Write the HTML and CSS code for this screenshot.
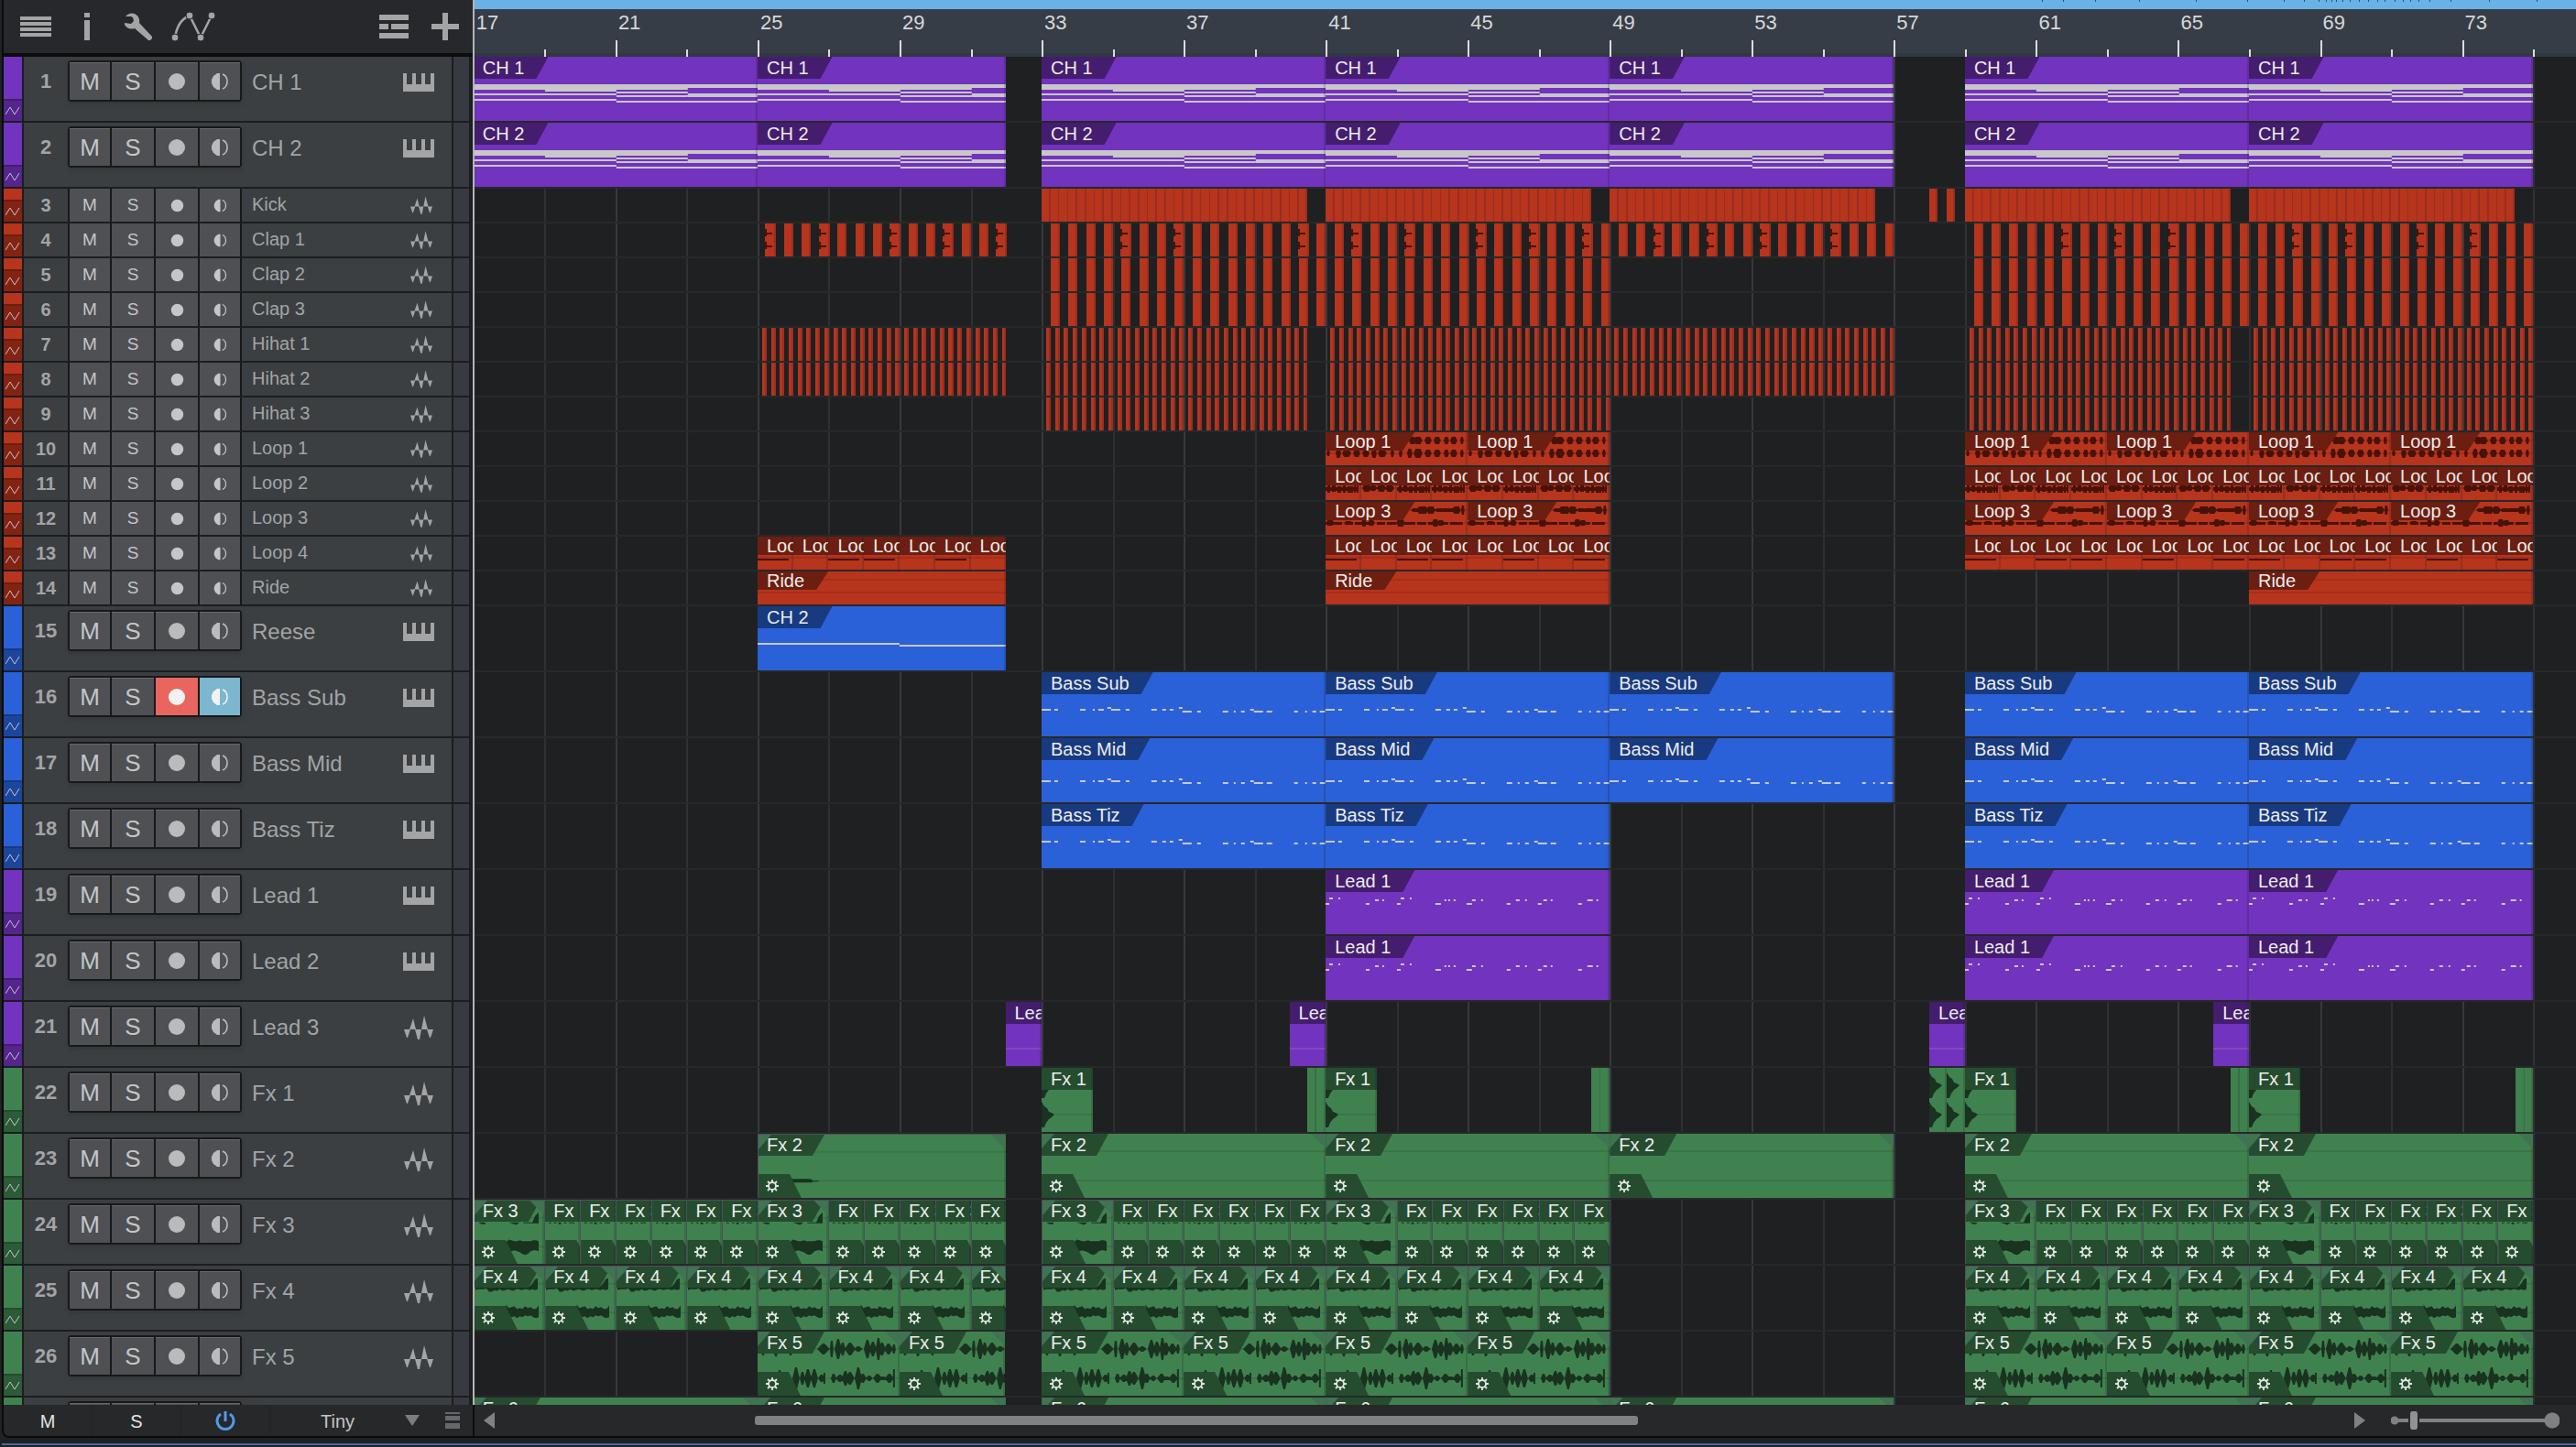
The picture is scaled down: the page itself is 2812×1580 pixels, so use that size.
FILE: index.html
```html
<!DOCTYPE html>
<html lang="en">
<head>
  <meta charset="UTF-8" />
  <meta name="viewport" content="width=device-width, initial-scale=1.0"/>
  <title>Arrangement</title>
  <link rel="stylesheet" href="styles.css">
</head>
<body>
  <svg class="symbols" aria-hidden="true">
    <symbol id="keys" viewBox="0 0 34 20"><path d="M0 0H4V12H10V0H14V12H20V0H24V12H30V0H34V20H0Z"/></symbol>
    <symbol id="audio" viewBox="0 0 32 26"><path d="M0 15H6L10 3L13 15H19L22 0L26 15H32L29 24H28L25 15L19 15L17 26H15L12 15H7L4 24H3Z"/></symbol>
    <symbol id="rec" viewBox="0 0 20 20"><circle cx="10" cy="10" r="9"/></symbol>
    <symbol id="monitor" viewBox="0 0 20 20"><path d="M10 1H7L3 4L1 8V12L3 16L7 19H10Z"/><path d="M13 2Q18 4 18 10T13 18" fill="none" stroke="currentColor" stroke-width="1.6"/></symbol>
    <symbol id="auto" viewBox="0 0 16 10"><path d="M0 9L5 1L10 9L15 1" fill="none" stroke="currentColor"/></symbol>
    <symbol id="gear" viewBox="0 0 14 14"><circle cx="7" cy="7" r="4" fill="none" stroke="currentColor" stroke-width="1.8"/><path d="M7 0V3M7 11V14M0 7H3M11 7H14M2 2L4 4M10 10L12 12M12 2L10 4M4 10L2 12" fill="none" stroke="currentColor" stroke-width="1.8"/></symbol>
  </svg>

  <main class="window">
    <header class="toolbar">
      <button class="tool" aria-label="Track list"><svg width="34" height="22"><path d="M0 2H34M0 8H34M0 14H34M0 20H34" stroke="currentColor" stroke-width="4"/></svg></button>
      <button class="tool" aria-label="Inspector"><svg width="6" height="30"><path d="M0 0H6V5H0ZM0 8H6V30H0Z"/></svg></button>
      <button class="tool" aria-label="Options"><svg width="31" height="30" viewBox="0 0 31 30"><path d="M1 4Q5 -1 11 1Q17 4 16 11L30 26L30 28L28 30H26L11 17Q4 19 0 13V11L7 12L10 9L9 5L7 4Z"/></svg></button>
      <button class="tool tool-wide" aria-label="Show automation"><svg width="48" height="32" viewBox="0 0 48 32"><path d="M4 28Q7 9 20 4L32 28L44 4" fill="none" stroke="currentColor" stroke-width="2.5"/><g stroke="#27282b"><circle cx="4" cy="28" r="4"/><circle cx="20" cy="4" r="4"/><circle cx="32" cy="28" r="4"/><circle cx="44" cy="4" r="4"/></g></svg></button>
      <button class="tool tool-right" aria-label="Arranger"><svg width="32" height="26"><path d="M0 0H32V6H0ZM0 10H10V16H0ZM13 10H32V16H13ZM0 20H32V26H0Z"/></svg></button>
      <button class="tool" aria-label="Add tracks"><svg width="30" height="30"><path d="M12 0H18V12H30V18H18V30H12V18H0V12H12Z"/></svg></button>
    </header>
    <div class="ruler" id="ruler"></div>

    <ol class="track-list" id="trackList"></ol>
    <section class="arrangement" id="arrangement" aria-label="Arrangement"></section>

    <footer class="track-footer">
      <button class="foot-btn">M</button>
      <button class="foot-btn">S</button>
      <button class="foot-btn power" aria-label="Power"><svg width="22" height="22" viewBox="0 0 22 22"><path d="M6 3A9 9 0 1 0 16 3M11 0V11" fill="none" stroke="currentColor" stroke-width="3"/></svg></button>
      <label class="size-pick">
        <select aria-label="Track height"><option>Tiny</option><option>Small</option><option>Normal</option></select>
        <svg width="16" height="12"><path d="M0 0H16L8 12Z"/></svg>
      </label>
      <button class="foot-menu" aria-label="Sizes"><svg width="16" height="18"><path d="M0 1H16" stroke="currentColor" stroke-width="2"/><path d="M0 4H16V9H0ZM0 12H16V18H0Z"/></svg></button>
    </footer>
    <footer class="scroll-footer">
      <button class="arrow" aria-label="Scroll left"><svg width="12" height="18"><path d="M12 0V18L0 9Z"/></svg></button>
      <div class="scroll-track"><div class="scroll-thumb"></div></div>
      <button class="arrow" aria-label="Scroll right"><svg width="12" height="18"><path d="M0 0V18L12 9Z"/></svg></button>
      <label class="zoom"><input type="range" min="0" max="100" value="11" aria-label="Horizontal zoom"></label>
    </footer>
  </main>
  <div class="desk-edge"></div>

  <script src="script.js"></script>
</body>
</html>
```
FILE: styles.css
```css
* { box-sizing: border-box; }
html, body { height: 100%; }
body {
  margin: 0;
  padding-left: 2px;
  display: flex;
  flex-direction: column;
  background: #202123;
  font-family: "Liberation Sans", Arial, sans-serif;
  color: #a2a4a6;
  overflow: hidden;
}
button { padding: 0; border: none; background: none; color: inherit; font-family: inherit; cursor: pointer; }
svg { display: block; fill: currentColor; }
.symbols { position: absolute; width: 0; height: 0; }

.window {
  flex: 1;
  min-height: 0;
  display: grid;
  grid-template-columns: 514px 1fr;
  grid-template-rows: 62px 1fr 34px;
  border-left: 2px solid #0a0b0c;
  border-bottom: 2px solid #0a0b0c;
  border-bottom-left-radius: 8px;
  background: #27282a;
}
.desk-edge { height: 10px; padding-top: 6px; }
.desk-edge::before { content: ""; display: block; height: 2px; background: #456a9c; }

/* top bar */
.toolbar { display: flex; align-items: center; padding: 0 2px 0 7px; background: #27282b; border-bottom: 4px solid #0b0c0d; border-right: 2px solid #0b0c0d; }
.tool { width: 56px; height: 58px; display: flex; align-items: center; justify-content: center; }
.tool-wide { width: 64px; }
.tool-right { margin-left: auto; }
.ruler { position: relative; background: #363d46; border-top: 10px solid #68b2e6; border-bottom: 4px solid #303842; box-shadow: -2px 0 0 #b4b5b7; }
.bar-no { position: absolute; top: 3px; margin-left: 3px; font-size: 22px; line-height: 24px; color: #d6d8da; }
.tick { position: absolute; bottom: -4px; width: 2px; height: 8px; background: #dcdcdc; }
.tick.major { height: 18px; }
.blip { position: absolute; top: -10px; width: 1px; height: 2px; background: #27506e; }

/* track headers */
.track-list { margin: 0; padding: 0; list-style: none; overflow: hidden; min-height: 0; background: #1c1d1f; border-right: 2px solid #0b0c0d; }
.track { display: flex; height: 72px; padding-bottom: 2px; width: 508px; background: #1c1d1f; }
.track.small { height: 38px; }
.strip { width: 20px; margin-right: 2px; display: flex; flex-direction: column; background: var(--clip); }
.strip svg { margin-top: auto; width: 20px; height: 24px; padding: 6px 2px; border-top: 2px solid var(--label); background: var(--strip); color: #c9bfd2; }
.track-main { width: 467px; height: 70px; padding-bottom: 17px; display: flex; align-items: center; background: #3b3f41; }
.small .track-main { height: 36px; padding-bottom: 0; }
.track-no { width: 48px; text-align: center; font-size: 22px; font-weight: bold; }
.small .track-no { font-size: 20px; }
.switches { width: 190px; height: 45px; padding: 2px; display: grid; grid-template-columns: 44px 46px 46px 44px; gap: 2px; background: #17181a; border-radius: 4px; box-shadow: 0 3px 4px #35383b; }
.small .switches { height: 36px; padding: 0 2px; border-radius: 0; box-shadow: none; }
.switches button { display: flex; align-items: center; justify-content: center; font-size: 26px; background: #4e5054; border-top: 1px solid #67696d; color: #c4c6c8; }
.small .switches button { font-size: 19px; border-top: none; }
.switches svg { width: 20px; height: 20px; color: #b9bbbd; }
.small .switches svg { width: 15px; height: 15px; color: #c4c6c8; }
.switches .armed { background: #e8665f; border-color: #e8665f; }
.switches .listening { background: #7cb6cf; border-color: #7cb6cf; }
.switches .armed svg, .switches .listening svg { color: #f2f2f2; }
.track-name { margin-left: 11px; padding-top: 2px; flex: 1; font-size: 24px; white-space: nowrap; }
.small .track-name { padding-top: 0; font-size: 20px; line-height: 34px; height: 36px; }
.kind { width: 34px; height: 20px; margin-right: 19px; margin-top: 2px; }
.kind.wave { height: 26px; }
.small .kind { width: 24px; height: 20px; margin-right: 21px; margin-top: 0; }
.track-end { width: 17px; margin-left: 2px; background: #373a40; }

/* clips */
.arrangement { position: relative; overflow: hidden; min-height: 0; background: #1f2022; box-shadow: -2px 0 0 #b4b5b7; }
.grid-line { position: absolute; top: 0; bottom: 0; width: 2px; background: #2f3032; }
.grid-line.major { background: #39393c; }
.lane { position: relative; height: 72px; border-bottom: 2px solid #27282a; }
.lane.small { height: 38px; }
.clip { position: absolute; top: 0; height: 100%; overflow: hidden; background: var(--clip); color: var(--wave); }
.clip::after { content: ""; position: absolute; top: 0; right: 0; width: 2px; height: 100%; background: rgba(30, 30, 40, 0.2); }
.clip .drawing { position: absolute; left: 0; top: 0; width: 100%; height: 100%; }
.clip-name { position: absolute; left: 0; top: 0; height: 24px; padding: 0 26px 0 10px; font-size: 20px; line-height: 24px; white-space: nowrap; background: var(--label); color: #ececec; clip-path: polygon(0 0, 100% 0, calc(100% - 13px) 100%, 0 100%); }
.small .clip-name { height: 20px; line-height: 20px; }
.clip.short .clip-name { clip-path: none; }
.fx-badge { position: absolute; left: 0; bottom: 0; width: 47px; height: 26px; padding: 6px 9px; background: var(--label); color: #dfe5e0; clip-path: polygon(0 0, 34px 0, 100% 100%, 0 100%); }
.fx-badge svg { width: 14px; height: 14px; }
.fade::before { content: ""; position: absolute; z-index: 1; left: 0; top: 0; width: 100%; height: 16px; background: #3f7351; clip-path: polygon(0 0, 14px 0, 0 100%, 0 0, 100% 0, 100% 100%, calc(100% - 16px) 0, 0 0); }
.fade .clip-name { padding-right: 24px; }
.framed { border-left: 1px solid #4d5159; border-top: 1px solid #4d5159; }
.framed .clip-name { height: 23px; padding-left: 9px; line-height: 22px; }
.framed .fx-badge { padding-left: 8px; }

.purple { --clip: #7233be; --label: #441d6f; --strip: #54258c; --wave: #c8c8c8; }
.red { --clip: #b7341d; --label: #6c1e10; --strip: #832413; --wave: #471309; }
.blue { --clip: #2a61d8; --label: #183a80; --strip: #1c469c; --wave: #c8c8c8; }
.green { --clip: #40824f; --label: #254c2f; --strip: #2c5b37; --wave: #1a3220; }

/* bottom bar */
.track-footer { display: flex; align-items: center; background: #27282a; border-right: 2px solid #0b0c0d; border-bottom-left-radius: 6px; }
.foot-btn { width: 97px; height: 34px; display: flex; align-items: center; justify-content: center; padding-top: 2px; font-size: 20px; color: #e2e3e4; border-right: 1px solid #222325; }
.power { color: #4f9bea; }
.size-pick { flex: 1; display: flex; align-items: center; color: #7b7d80; }
.size-pick select { width: 147px; height: 30px; padding: 2px 0 0 55px; appearance: none; border: none; background: none; font: 20px "Liberation Sans", Arial, sans-serif; color: #c3c5c7; }
.foot-menu { margin-right: 14px; color: #66686d; }
.scroll-footer { display: flex; align-items: center; padding: 0 18px 0 10px; color: #808183; }
.scroll-track { flex: 1; height: 10px; }
.scroll-thumb { width: 47.5%; height: 10px; margin-left: 14%; border-radius: 3px; background: #808183; }
.zoom { margin-left: 28px; }
.zoom input {
  display: block; width: 184px; height: 20px; margin: 0; appearance: none;
  background:
    radial-gradient(circle at 4px 10px, #808183 4px, transparent 5px),
    radial-gradient(circle at 176px 10px, #808183 8px, transparent 9px),
    linear-gradient(#808183, #808183) 4px 8px / 172px 4px no-repeat;
}
.zoom input::-webkit-slider-thumb { appearance: none; width: 12px; height: 20px; border: 2px solid #27282a; border-width: 0 2px; border-radius: 4px; background: #919294; }
```
FILE: script.js
```js
const FIRST_BAR = 17;
const VIEW_START = 17.03;
const BARS_SHOWN = 59.18;
const UNIT = 38.8; // drawing units per bar

const pos = bar => (bar - VIEW_START) / BARS_SHOWN * 100 + "%";
const span = len => len / BARS_SHOWN * 100 + "%";
const icon = (id, cls = "") => `<svg class="${cls}"><use href="#${id}"/></svg>`;

// ---- drawings inside the clips ----

const rects = list => list.map(([x, y, w, h]) => `M${x} ${y}h${w}v${h}h${-w}z`).join("");

const chords = rects([
  [0, 30, 312, 4], [0, 34, 78, 2], [78, 34, 78, 4], [0, 40, 156, 2], [0, 46, 156, 2],
  [156, 34, 78, 2], [156, 38, 78, 2], [156, 42, 78, 2], [234, 40, 78, 4], [156, 48, 156, 2]
]);

// [from, to, row] with 2px per row
const notes = (list, top) => rects(list.map(([a, b, r]) => [a, top + r * 2, b - a, 2]));
const bassLine = [
  [0, 10, 1], [14, 18, 1], [42, 48, 1], [56, 58, 1], [62, 68, 1], [72, 76, 0], [76, 86, 1], [92, 96, 1],
  [120, 126, 1], [132, 136, 1], [140, 144, 1], [150, 154, 0], [154, 164, 2], [170, 174, 2], [198, 204, 2],
  [210, 212, 2], [218, 222, 2], [228, 232, 1], [232, 242, 2], [246, 252, 2], [276, 280, 2], [288, 290, 2],
  [296, 300, 2], [304, 310, 2]
];
const leadLine = [
  [0, 4, 3], [4, 8, 0], [14, 16, 0], [44, 48, 3], [54, 58, 1], [62, 64, 1], [78, 82, 3], [82, 86, 0],
  [92, 94, 0], [120, 126, 3], [130, 132, 1], [134, 136, 1], [140, 142, 1], [154, 160, 3], [160, 164, 1],
  [170, 172, 1], [198, 202, 3], [208, 212, 1], [218, 220, 1], [232, 236, 3], [238, 242, 1], [246, 248, 1],
  [276, 280, 3], [286, 292, 1], [296, 298, 1]
];

// [x, half width, height] lumps round a centre line
const spikes = (list, cy) => list.map(([x, w, h]) =>
  `M${x - w} ${cy}L${x - 1} ${cy - h}H${x + 1}L${x + w} ${cy}L${x + 1} ${cy + h}H${x - 1}z`).join("");
const blobs = (list, cy) => list.map(([x, w, h]) =>
  `M${x - w} ${cy}L${x - w / 2} ${cy - h}H${x + w / 2}L${x + w} ${cy}L${x + w / 2} ${cy + h}H${x - w / 2}z`).join("");
// ragged band: heights above and below the centre, every 3px
const band = (x, cy, ups, downs) =>
  `M${x} ${cy}` + ups.map((u, i) => `L${x + i * 3} ${cy - u}`).join("") +
  downs.map((d, i) => `L${x + (downs.length - 1 - i) * 3} ${cy + downs[downs.length - 1 - i]}`).join("") + "z";

const loop1 = blobs([[95, 4, 4], [101, 5, 4], [112, 4, 4], [122, 4, 4], [132, 3, 4], [140, 4, 4], [149, 2, 4]], 9) +
  blobs([[3, 2, 3], [14, 3, 5], [23, 5, 4], [34, 4, 4], [44, 4, 4], [53, 3, 5], [62, 5, 4], [73, 2, 4], [82, 2, 4],
    [92, 3, 5], [101, 5, 5], [112, 4, 4], [122, 4, 4], [132, 3, 4], [140, 4, 4], [149, 2, 4]], 23);
const loop2a = rects([[0, 22, 36, 4], [2, 20, 3, 8], [7, 20, 4, 7], [13, 21, 4, 7], [19, 20, 3, 8], [24, 21, 6, 7], [31, 20, 2, 8], [34, 20, 2, 8]]);
const loop2b = blobs([[6, 5, 4], [13, 4, 3], [22, 5, 4], [31, 5, 4]], 23) + rects([[2, 22, 32, 2]]);
const loop3 = blobs([[98, 5, 2], [104, 4, 4], [108, 4, 4], [115, 5, 4], [124, 5, 2], [134, 10, 2], [143, 5, 4], [150, 2, 5]], 9) +
  rects([[0, 22, 18, 3], [21, 22, 9, 3], [32, 22, 8, 3], [43, 22, 10, 3], [56, 22, 9, 3], [67, 22, 10, 3], [80, 22, 18, 3], [100, 22, 10, 3], [112, 22, 22, 3], [136, 22, 14, 3]]) +
  blobs([[5, 5, 3], [25, 5, 2], [42, 3, 4], [50, 4, 3], [82, 5, 4], [120, 4, 4], [126, 4, 3]], 23);
const loop4 = rects([[0, 24, 34, 2]]);
const clapTail = rects([[0, 6, 2, 8], [2, 10, 6, 2], [0, 20, 2, 8], [2, 24, 6, 2]]);

const hit = cy => `M0 ${cy - 14}L3 ${cy - 9}L6 ${cy - 7}L8 ${cy - 3}L11 ${cy - 2}L14 ${cy}L11 ${cy + 3}L8 ${cy + 5}L5 ${cy + 9}L3 ${cy + 14}H0z`;
const fx1 = hit(19) + hit(51);
const fx2 = "M34 49H57L60 51H66V52H60L58 53H34z";
const fx3 = "M64 24L67 17L71 13V24zM4 24H12V26H8zM38 24H50L46 27zM54 24H71V25H54z" +
  band(35, 51, [5, 8, 7, 6, 6, 7, 6, 6, 6, 6, 7, 7, 6], [2, 4, 5, 4, 5, 6, 8, 9, 8, 5, 4, 4, 5]);
const fx3short = "M4 24H7V25H4zM10 24H13V25H10zM15 24H18V26H15zM21 24H24V25H21zM27 24H33V25H27z";
const fx4 = band(1, 22, [0, 0, 0, 0, 0, 0, 0, 0, 0, 0, 0, 0, 0, 0, 0, 0, 0, 0, 0, 0, 0, 3, 8, 9],
  [4, 3, 3, 3, 2, 6, 6, 4, 5, 3, 5, 4, 3, 4, 5, 3, 3, 4, 3, 3, 4, 3, 4, 3]) +
  band(35, 51, [9, 5, 6, 7, 4, 5, 4, 7, 5, 6, 4, 4, 8], [1, 3, 5, 4, 6, 4, 5, 3, 4, 3, 5, 6, 5]);
const fx5 = spikes([[6, 3, 7], [20, 3, 8], [36, 3, 7], [72, 7, 6], [81, 2, 9], [88, 4, 11], [93, 3, 7], [101, 6, 7], [110, 5, 3],
  [120, 4, 10], [126, 4, 8], [132, 3, 12], [136, 4, 7], [143, 5, 6], [149, 2, 5]], 19) +
  spikes([[24, 3, 9], [42, 4, 12], [49, 3, 7], [55, 4, 10], [62, 4, 10], [70, 4, 4], [73, 1, 6], [83, 3, 5], [90, 5, 4], [96, 4, 8],
    [101, 5, 7], [110, 4, 12], [115, 4, 5], [122, 4, 3], [131, 5, 5], [137, 5, 2], [144, 5, 5], [149, 1, 10]], 51);

// ---- arrangement data ----

const long = [[25, 31.98], [33, 41], [41, 49], [49, 57], [59, 67], [67, 75]];
const at = (...starts) => long.filter(c => starts.includes(c[0]));
const named = (name, list, draw, extra = {}) => list.map(([from, to]) => ({ from, to, name, draw, ...extra }));

function every(step, offset, width, from, to) {
  const list = [];
  for (let b = from + offset; b < to - 0.02; b += step) list.push({ from: b, to: Math.min(b + width, to) });
  return list;
}
function claps(from, to, marked = []) {
  return every(0.5, 0.25, 0.26, from, to).map((c, i) =>
    marked.includes(i) ? { from: c.from - 0.03, to: Math.min(c.from + 0.28, to), draw: clapTail } : c);
}
const hats = starts => starts.flatMap(([a, b]) => every(0.25, 0.13, 0.13, a, b));
const split = (step, ranges) => ranges.flatMap(([a, b]) => {
  const list = [];
  for (let s = a; s < b; s += step) list.push([s, Math.min(s + step, b)]);
  return list;
});
const intro = [25, 31.98];
const a = [33, 40.48], b = [41, 49], c = [49, 57], d = [59, 66.48], e = [67, 75];
const clapRow = [[33, 41], [41, 49], [59, 67], [67, 75]].flatMap(([x, y]) => claps(x, y));

const loopBars = (name, ranges, on, off) => ranges.flatMap(([x, y]) =>
  split(1, [[x, y]]).map(([f, t], i) => ({ from: f, to: t, name, draw: [0, 2, 3, 5, 7].includes(i) ? on : off, audio: true, short: true })));
const green = { audio: true, badge: true, fade: true };
const full = [[17, 25], ...long];

const fx3clips = full.filter(r => r[0] !== 49).flatMap(([x, y]) => [
  { from: x, to: x + 2, name: "Fx 3", draw: fx3, framed: true, ...green },
  ...split(1, [[x + 2, y]]).map(([f, t]) => ({ from: f, to: t, name: "Fx 3", draw: fx3short, framed: true, audio: true, badge: true, short: true }))
]);

const tracks = [
  { name: "CH 1", color: "purple", clips: named("CH 1", full, chords) },
  { name: "CH 2", color: "purple", clips: named("CH 2", full, chords) },
  { name: "Kick", color: "red", small: true, clips: [
    ...[a, [41, 48.48], [49, 56.48], d, [67, 74.48]].flatMap(([x, y]) => every(0.25, 0, 0.26, x, y)),
    { from: 58, to: 58.23 }, { from: 58.48, to: 58.73 }] },
  { name: "Clap 1", color: "red", small: true, clips: [
    ...claps(25, 32.05, [0, 3, 7, 10, 13]), ...claps(33, 41, [4, 7, 14]), ...claps(41, 49, [1, 4, 8, 11, 14]),
    ...claps(49, 57, [2, 5, 8, 12]), ...claps(59, 67, [5, 8, 11]), ...claps(67, 75, [2, 5, 9, 12])] },
  { name: "Clap 2", color: "red", small: true, clips: clapRow },
  { name: "Clap 3", color: "red", small: true, clips: clapRow },
  { name: "Hihat 1", color: "red", small: true, clips: hats([intro, a, b, c, d, e]) },
  { name: "Hihat 2", color: "red", small: true, clips: hats([intro, a, b, c, d, e]) },
  { name: "Hihat 3", color: "red", small: true, clips: hats([a, b, d, e]) },
  { name: "Loop 1", color: "red", small: true, clips: named("Loop 1", split(4, at(41, 59, 67)), loop1, { audio: true }) },
  { name: "Loop 2", color: "red", small: true, clips: loopBars("Loop 2", at(41, 59, 67), loop2a, loop2b) },
  { name: "Loop 3", color: "red", small: true, clips: named("Loop 3", split(4, at(41, 59, 67)), loop3, { audio: true }) },
  { name: "Loop 4", color: "red", small: true, clips: loopBars("Loop 4", at(25, 41, 59, 67), loop4, "") },
  { name: "Ride", color: "red", small: true, clips: named("Ride", at(25, 41, 67), "", { audio: true }) },
  { name: "Reese", color: "blue", clips: named("CH 2", at(25), rects([[0, 40, 155, 2], [155, 42, 155, 2]])) },
  { name: "Bass Sub", color: "blue", armed: true, clips: named("Bass Sub", at(33, 41, 49, 59, 67), notes(bassLine, 38)) },
  { name: "Bass Mid", color: "blue", clips: named("Bass Mid", at(33, 41, 49, 59, 67), notes(bassLine, 44)) },
  { name: "Bass Tiz", color: "blue", clips: named("Bass Tiz", at(33, 41, 59, 67), notes(bassLine, 38)) },
  { name: "Lead 1", color: "purple", clips: named("Lead 1", at(41, 59, 67), notes(leadLine, 30)) },
  { name: "Lead 2", color: "purple", clips: named("Lead 1", at(41, 59, 67), notes(leadLine, 30)) },
  { name: "Lead 3", color: "purple", wave: true, clips: named("Lead 3", [[31.98, 33], [39.98, 41], [58, 59], [66, 67]], "", { audio: true, short: true }) },
  { name: "Fx 1", color: "green", wave: true, clips: [
    ...named("Fx 1", [[33, 34.45], [41, 42.45], [59, 60.45], [67, 68.45]], fx1, { audio: true, short: true }),
    ...every(0.25, 0, 0.27, 40.48, 41), ...every(0.25, 0, 0.27, 48.48, 49), ...every(0.25, 0, 0.27, 66.48, 67), ...every(0.25, 0, 0.27, 74.52, 75),
    { from: 58, to: 58.48, draw: fx1 }, { from: 58.48, to: 59, draw: fx1 }] },
  { name: "Fx 2", color: "green", wave: true, clips: [
    ...named("Fx 2", at(25), fx2, { framed: true, ...green }), ...named("Fx 2", at(33, 41, 49, 59, 67), "", green)] },
  { name: "Fx 3", color: "green", wave: true, clips: fx3clips },
  { name: "Fx 4", color: "green", wave: true, clips: named("Fx 4", split(2, full.filter(r => r[0] !== 49)), fx4, { framed: true, ...green }) },
  { name: "Fx 5", color: "green", wave: true, clips: named("Fx 5", split(4, at(25, 33, 41, 59, 67)), fx5, green) },
  { name: "Fx 6", color: "green", wave: true, clips: named("Fx 6", full, "", green) }
];

// ---- render ----

function clipHtml(clip, small) {
  const len = clip.to - clip.from;
  const h = small ? 36 : 70;
  const cls = ["clip", clip.fade && "fade", clip.framed && "framed", clip.short && "short"].filter(Boolean).join(" ");
  const lines = clip.audio
    ? `<path d="${rects(small ? [[0, 8, 400, 2], [0, 22, 400, 2]] : [[0, 18, 400, 2], [0, 50, 400, 2]])}" opacity="0.15"/>` : "";
  const drawing = clip.draw || lines
    ? `<svg class="drawing" viewBox="0 0 ${len * UNIT} ${h}" preserveAspectRatio="none">${lines}<path d="${clip.draw || ""}"/></svg>` : "";
  const label = clip.name ? `<span class="clip-name">${clip.name}</span>` : "";
  const badge = clip.badge ? `<span class="fx-badge">${icon("gear")}</span>` : "";
  return `<div class="${cls}" style="left:${pos(clip.from)};width:${span(len)}">${drawing}${label}${badge}</div>`;
}

function trackHtml(t, i) {
  return `<li class="track ${t.color} ${t.small ? "small" : ""}">
    <div class="strip">${icon("auto")}</div>
    <div class="track-main">
      <span class="track-no">${i + 1}</span>
      <div class="switches">
        <button aria-label="Mute ${t.name}">M</button>
        <button aria-label="Solo ${t.name}">S</button>
        <button class="${t.armed ? "armed" : ""}" aria-label="Record ${t.name}">${icon("rec")}</button>
        <button class="${t.armed ? "listening" : ""}" aria-label="Monitor ${t.name}">${icon("monitor")}</button>
      </div>
      <span class="track-name">${t.name}</span>
      ${t.small || t.wave ? icon("audio", "kind wave") : icon("keys", "kind")}
    </div>
    <div class="track-end"></div>
  </li>`;
}

let ruler = "";
let grid = "";
for (let bar = FIRST_BAR; bar <= 75; bar += 2) {
  const major = (bar - FIRST_BAR) % 4 === 0 ? "major" : "";
  if (bar > FIRST_BAR) {
    ruler += `<i class="tick ${major}" style="left:${pos(bar)}"></i>`;
    grid += `<i class="grid-line ${major}" style="left:${pos(bar)}"></i>`;
  }
  if (major) ruler += `<span class="bar-no" style="left:${pos(bar)}">${bar}</span>`;
}
[61.17, 61.76, 62.67, 63.91, 65.51, 66.96, 67.98, 68.56, 68.95, 69.17, 69.32, 69.44, 69.62, 69.84, 70.1, 70.35,
  70.62, 70.82, 71.1, 71.34, 71.53, 71.76, 72.08, 72.68, 73.77, 75.09].forEach(p => {
  ruler += `<i class="blip" style="left:${pos(p)}"></i>`;
});

document.getElementById("ruler").innerHTML = ruler;
document.getElementById("trackList").innerHTML = tracks.map(trackHtml).join("");
document.getElementById("arrangement").innerHTML = grid + tracks.map(t =>
  `<div class="lane ${t.color} ${t.small ? "small" : ""}">${t.clips.map(cl => clipHtml(cl, t.small)).join("")}</div>`).join("");
```
